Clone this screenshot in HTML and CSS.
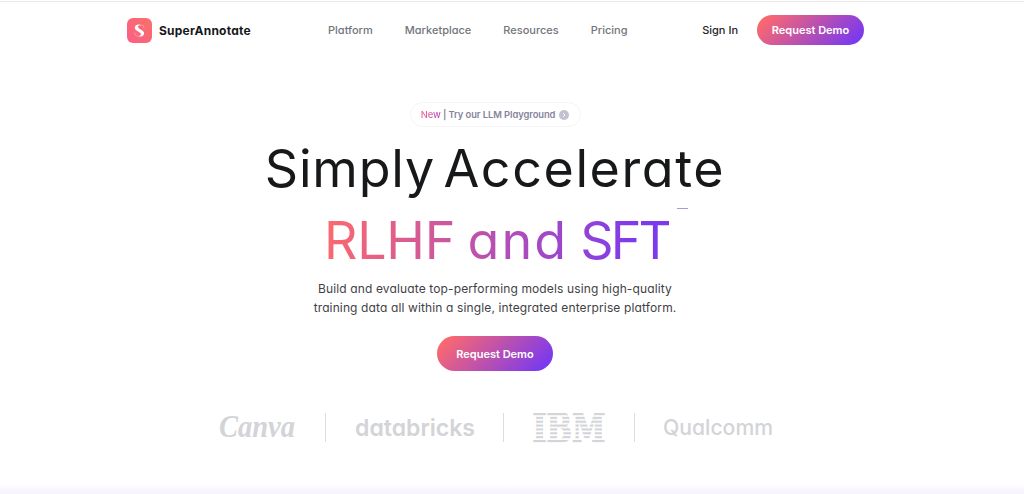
FILE: index.html
```html
<!DOCTYPE html>
<html lang="en">
<head>
<meta charset="UTF-8">
<meta name="viewport" content="width=device-width, initial-scale=1.0">
<title>SuperAnnotate</title>
<link rel="stylesheet" href="styles.css">
</head>
<body>
<header class="header">
  <a class="brand" href="#">
    <span class="brand-icon">
      <svg width="25" height="25" viewBox="0 0 26 26">
        <path d="M15.2 8.1C13.4 6.9 11.4 7.6 11.5 9.3C11.7 11.9 17.8 12.2 17.8 15.8C17.8 19 13.6 20.2 11.4 18.6C13.4 18.9 14.8 18 14.4 16.4C13.8 14.2 8.1 13.5 8.1 10.1C8.1 6.4 13.2 5.6 15.2 8.1Z" fill="#fff"/>
        <path d="M15.4 7C17 7.6 17.8 9 17.6 10.7M8 15.2C8 17 9 18.6 11 19.3" fill="none" stroke="#fff" stroke-width=".6" opacity=".6"/>
      </svg>
    </span>
    <span class="brand-name">SuperAnnotate</span>
  </a>
  <nav class="nav">
    <a href="#">Platform</a>
    <a href="#">Marketplace</a>
    <a href="#">Resources</a>
    <a href="#">Pricing</a>
  </nav>
  <div class="actions">
    <a class="sign-in" href="#">Sign In</a>
    <a class="btn btn-small" href="#">Request Demo</a>
  </div>
</header>

<main class="hero">
  <a class="pill" href="#">
    <span><span class="pill-new">New</span> | Try our LLM Playground</span>
    <svg width="10" height="10" viewBox="0 0 10 10">
      <circle cx="5" cy="5" r="5" fill="#c3c1d0"/>
      <path d="M4.2 3.2L6 5L4.2 6.8" fill="none" stroke="#fff" stroke-width="1"/>
    </svg>
  </a>
  <h1 class="title">
    <span class="title-top">Simply <span class="wide">Accelerate</span></span>
    <span class="title-gradient">RLHF <span class="wide">and</span> <span class="tight">SFT</span></span>
    <i class="cursor"></i>
  </h1>
  <p class="lead">Build and evaluate top-performing models using high-quality<br>training data all within a single, integrated enterprise platform.</p>
  <a class="btn btn-large" href="#">Request Demo</a>

  <div class="logos">
    <svg class="logo canva" width="77" height="29">
      <text x="0" y="24" textLength="76" lengthAdjust="spacingAndGlyphs">Canva</text>
    </svg>
    <span class="divider"></span>
    <svg class="logo databricks" width="119" height="29">
      <text x="0" y="23" textLength="120" lengthAdjust="spacingAndGlyphs">databricks</text>
    </svg>
    <span class="divider"></span>
    <svg class="logo ibm" width="72" height="29">
      <defs>
        <pattern id="stripes" width="72" height="3.85" patternUnits="userSpaceOnUse">
          <rect width="72" height="2.1" fill="#d3d4d7"/>
        </pattern>
      </defs>
      <text x="-.5" y="28.6" textLength="73" lengthAdjust="spacingAndGlyphs">IBM</text>
    </svg>
    <span class="divider"></span>
    <svg class="logo qualcomm" width="108" height="29">
      <text x="-1" y="22" textLength="110" lengthAdjust="spacingAndGlyphs">Qualcomm</text>
    </svg>
  </div>
</main>
<div class="bottom-fade"></div>
</body>
</html>
```
FILE: styles.css
```css
* {
  box-sizing: border-box;
}

body {
  margin: 0;
  height: 494px;
  padding-top: 2px;
  display: flex;
  flex-direction: column;
  overflow: hidden;
  background: linear-gradient(#fff 1px, #e9e9ea 1px, #e9e9ea 2px, #fff 2px);
  font-family: Inter, sans-serif;
  font-feature-settings: "cv11"; /* single-storey a */
}

a {
  color: inherit;
  text-decoration: none;
}

.header {
  width: 737px;
  height: 56px;
  margin-left: 127px;
  display: flex;
  align-items: center;
  font-size: 11px;
  font-weight: 500;
}

.brand {
  width: 201px;
  display: flex;
  align-items: center;
  gap: 7px;
}

.brand-icon {
  width: 25px;
  height: 25px;
  border-radius: 6px;
  background: linear-gradient(45deg, #fb5f86, #f9706a);
}

.brand-icon svg {
  display: block;
}

.brand-name {
  color: #17181a;
  font-size: 12px;
  font-weight: 700;
  letter-spacing: 0.22px;
}

.nav {
  display: flex;
  gap: 32px;
  color: #74757c;
}

.actions {
  margin-left: auto;
  display: flex;
  align-items: center;
  gap: 19px;
}

.sign-in {
  color: #242528;
}

.btn {
  display: flex;
  align-items: center;
  justify-content: center;
  border-radius: 20px;
  background: linear-gradient(135deg, #ff6a6a 5%, #7c3aed 90%);
  color: #fff;
  font-size: 11px;
  font-weight: 600;
}

.btn-small {
  width: 107px;
  height: 30px;
}

.btn-large {
  width: 116px;
  height: 35px;
}

/* Hero */
.hero {
  width: 990px;
  padding-top: 44px;
  display: flex;
  flex-direction: column;
  align-items: center;
}

.pill {
  width: 171px;
  height: 25px;
  display: flex;
  align-items: center;
  justify-content: center;
  gap: 4px;
  border: 1px solid #f5f5f7;
  border-radius: 13px;
  color: #85849a;
  font-size: 9.4px;
  font-weight: 600;
  letter-spacing: -0.08px;
  white-space: nowrap;
}

.pill-new {
  background: linear-gradient(90deg, #f0648c, #b04fc0);
  -webkit-background-clip: text;
  background-clip: text;
  color: transparent;
  font-weight: 500;
}

.title {
  position: relative;
  margin: 6px 0 0;
  display: flex;
  flex-direction: column;
  align-items: center;
  font-size: 52px;
  font-weight: 400;
  line-height: 72px;
}

.title-top {
  color: #17181a;
  letter-spacing: 0.8px;
  word-spacing: -7px;
}

.title-top .wide {
  letter-spacing: 1.6px;
}

.title-gradient {
  margin-left: 3px;
  letter-spacing: -0.25px;
  word-spacing: -2px;
  background: linear-gradient(100deg, #ff6a6a, #7c3aed 90%);
  -webkit-background-clip: text;
  background-clip: text;
  color: transparent;
}

.title-gradient .wide {
  letter-spacing: 2px;
}

.title-gradient .tight {
  letter-spacing: -3px;
}

.cursor {
  position: absolute;
  right: 37px;
  top: 75px;
  width: 11px;
  height: 1px;
  background: #a99ad8;
}

.lead {
  margin: 3px 0 19px;
  color: #414246;
  font-size: 12px;
  line-height: 18.5px;
  letter-spacing: 0.13px;
  text-align: center;
}

/* Customers */
.logos {
  margin-top: 42px;
  display: flex;
  gap: 29px;
}

.logo {
  overflow: visible;
  fill: #d3d4d7;
}

.divider {
  width: 1px;
  height: 29px;
  background: #dcdce0;
}

.canva text {
  font: italic 700 31px "Liberation Serif", serif;
}

.databricks text {
  font-size: 23px;
  font-weight: 600;
}

.ibm text {
  font: 700 39px "DejaVu Serif", serif;
  fill: url(#stripes);
  stroke: url(#stripes);
  stroke-width: 1.4px;
}

.qualcomm text {
  font-size: 21px;
  font-weight: 500;
}

.bottom-fade {
  height: 10px;
  margin-top: auto;
  background: linear-gradient(#fff, #f8f5fe 60%);
}
```
